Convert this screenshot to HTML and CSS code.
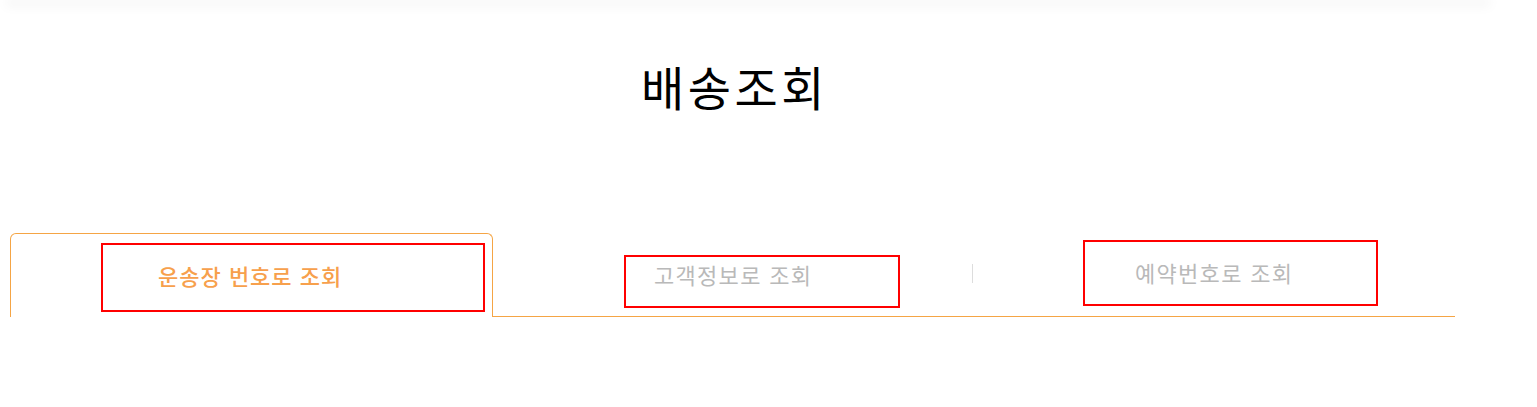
FILE: index.html
```html
<!DOCTYPE html>
<html lang="ko">
<head>
    <meta charset="UTF-8">
    <meta name="viewport" content="width=device-width, initial-scale=1.0">
    <title>배송조회</title>
    <link rel="stylesheet" href="styles.css">
</head>
<body>
    <div class="top-bar"></div>

    <div class="container">
        <h1 class="page-title">배송조회</h1>

        <div class="tabs">
            <div class="tab active">
                <a class="tab-link link-invoice">운송장 번호로 조회</a>
            </div>
            <div class="tab divider">
                <a class="tab-link link-customer">고객정보로 조회</a>
            </div>
            <div class="tab">
                <a class="tab-link link-reserve">예약번호로 조회</a>
            </div>
        </div>
    </div>
</body>
</html>
```

FILE: styles.css
```css
body {
    font-family: "Noto Sans CJK KR", "Noto Sans", sans-serif;
    background: #fff;
    color: #111;
    margin: 0;
    padding: 0;
}
.top-bar {
    width: 1480px;
    height: 1px;
    margin: -1px 0 0 8px;
    box-shadow: 0 3px 12px 3px rgba(0, 0, 0, 0.05);
}
.container {
    width: 1445px;
    margin-left: 10px;
}
.page-title {
    margin: 48px 0 0;
    font-size: 47px;
    font-weight: 400;
    letter-spacing: 3.5px;
    line-height: 76px;
    text-align: center;
    color: #000;
    padding-left: 4px;
}
.tabs {
    display: flex;
    margin-top: 109px;
    border-bottom: 1px solid #f5a545;
}
.tab {
    flex: 1;
    position: relative;
    height: 83px;
    box-sizing: border-box;
}
.tab.active {
    border: 1px solid #f5a545;
    border-bottom: none;
    border-radius: 6px 6px 0 0;
    margin-bottom: -1px;
    height: 84px;
    background: #fff;
}
.tab.divider::after {
    content: "";
    position: absolute;
    right: 1px;
    top: 31px;
    width: 1px;
    height: 19px;
    background: #ddd;
}
.tab-link {
    display: flex;
    align-items: center;
    box-sizing: border-box;
    border: 2px solid red;
    font-size: 22px;
    letter-spacing: 1px;
    color: #b9b9b9;
    cursor: pointer;
}
.link-invoice {
    width: 384px;
    height: 69px;
    margin: 9px 0 0 90px;
    padding: 0 0 6px 55px;
    color: #f7a04c;
    font-weight: 500;
}
.link-customer {
    width: 276px;
    height: 53px;
    margin: 22px 0 0 131px;
    padding: 0 0 15px 28px;
    letter-spacing: 1.3px;
}
.link-reserve {
    width: 295px;
    height: 66px;
    margin: 7px 0 0 109px;
    padding: 0 0 2px 50px;
    letter-spacing: 1.3px;
}
```
